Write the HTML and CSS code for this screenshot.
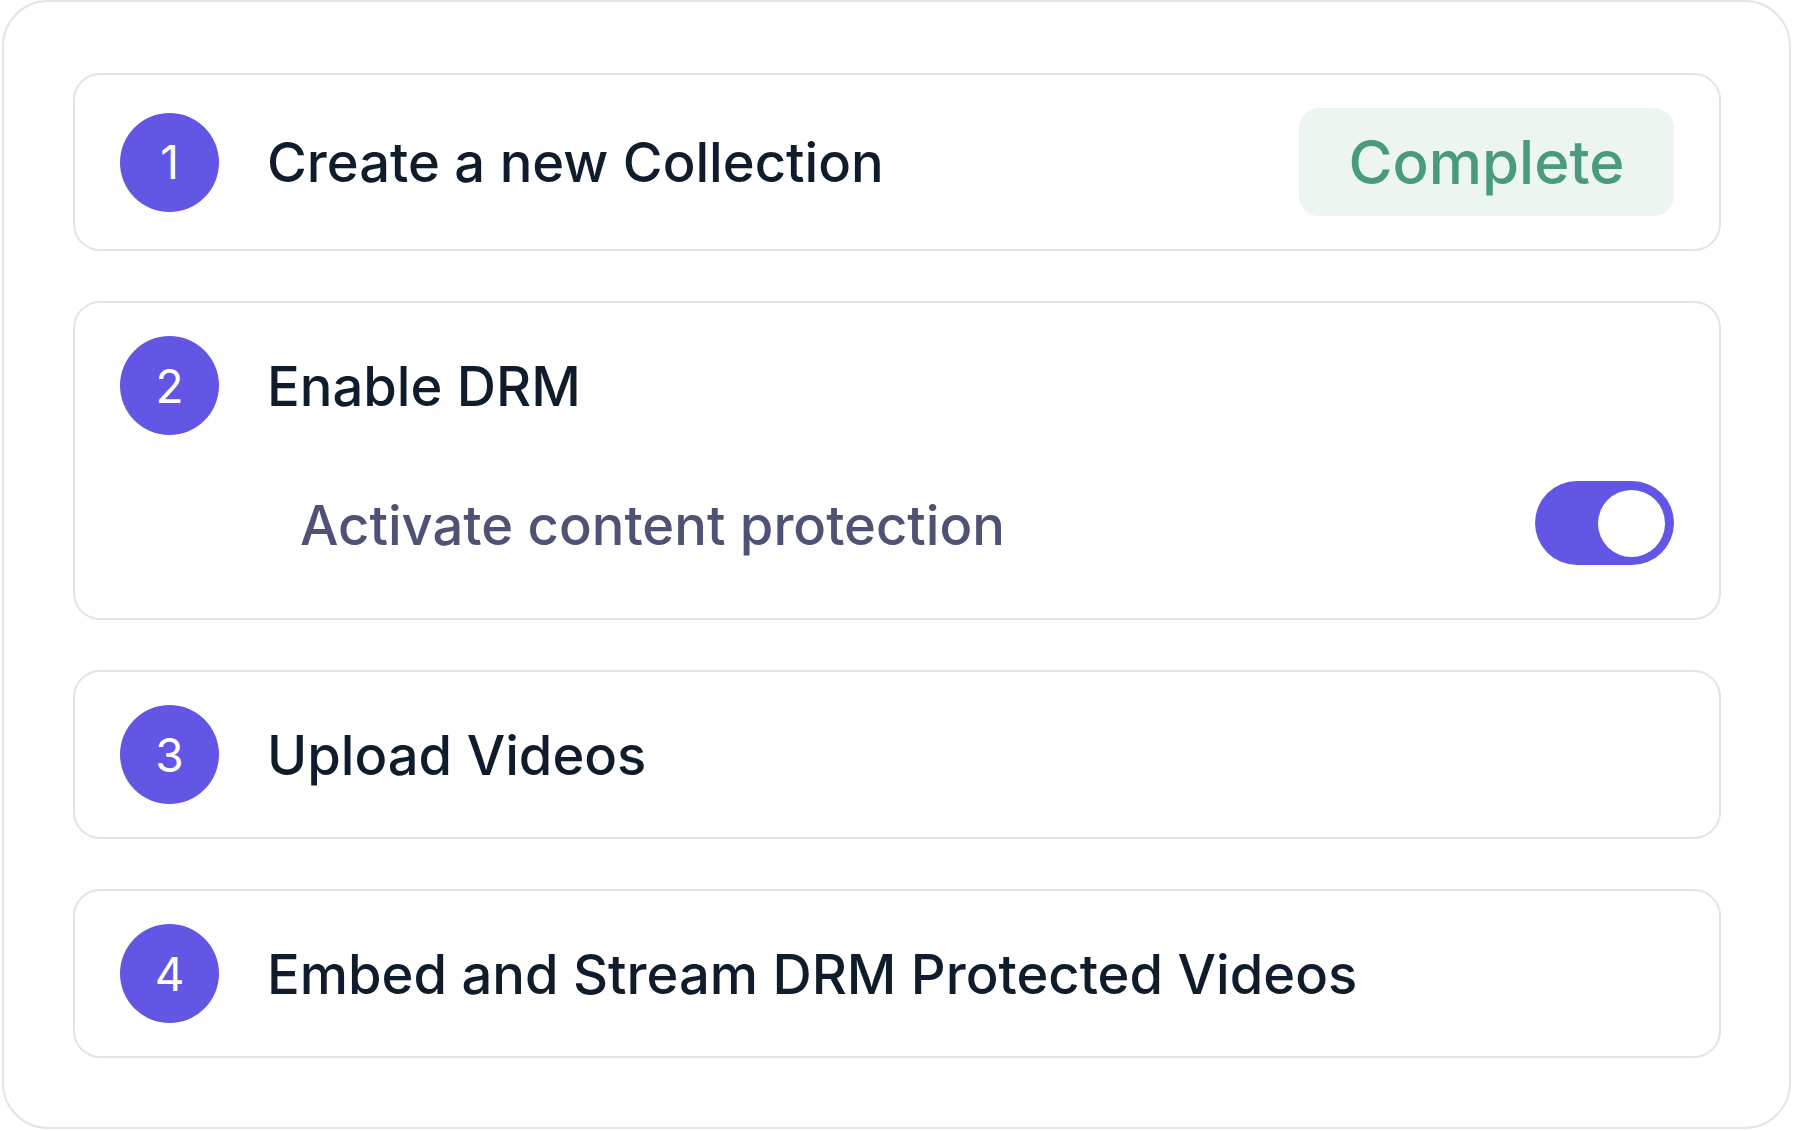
FILE: index.html
```html
<!DOCTYPE html>
<html lang="en">
<head>
<meta charset="utf-8">
<title>DRM setup steps</title>
<link rel="stylesheet" href="styles.css">
</head>
<body>
<div class="panel">
  <div class="step">
    <div class="step-row">
      <div class="num">1</div>
      <div class="title">Create a new Collection</div>
      <div class="badge">Complete</div>
    </div>
  </div>
  <div class="step step-expanded">
    <div class="step-row">
      <div class="num">2</div>
      <div class="title">Enable DRM</div>
    </div>
    <div class="sub-row">
      <div class="sub-label">Activate content protection</div>
      <div class="toggle"><span class="knob"></span></div>
    </div>
  </div>
  <div class="step">
    <div class="step-row">
      <div class="num">3</div>
      <div class="title">Upload Videos</div>
    </div>
  </div>
  <div class="step">
    <div class="step-row">
      <div class="num">4</div>
      <div class="title">Embed and Stream DRM Protected Videos</div>
    </div>
  </div>
</div>
</body>
</html>
```

FILE: styles.css
```css
* { box-sizing: border-box; }
html, body { margin: 0; padding: 0; background: #ffffff; }
body { font-family: Inter, "Noto Sans", sans-serif; color: #0f1c2b; }

.panel {
  width: 1789px;
  height: 1129px;
  margin-left: 2px;
  border: 2px solid #e3e3ea;
  border-radius: 46px;
  padding: 71px 68px 0 69px;
  display: flex;
  flex-direction: column;
  gap: 50px;
}

.step {
  border: 2px solid #e2e2e8;
  border-radius: 27px;
  padding: 33px 45px;
}

.step-row {
  display: flex;
  align-items: center;
  min-height: 99px;
}

.num {
  width: 99px;
  height: 99px;
  flex: 0 0 99px;
  border-radius: 50%;
  background: #6356e5;
  color: #ffffff;
  font-size: 46px;
  font-weight: 400;
  display: flex;
  align-items: center;
  justify-content: center;
}

.title {
  margin-left: 48px;
  font-size: 54.3px;
  font-weight: 500;
  flex: 1;
}

.badge {
  height: 108px;
  width: 375px;
  background: #edf5f1;
  color: #4a9a7d;
  border-radius: 20px;
  font-size: 60px;
  font-weight: 500;
  display: flex;
  align-items: center;
  justify-content: center;
}

.sub-row {
  display: flex;
  align-items: center;
  justify-content: space-between;
  margin-top: 46px;
  margin-bottom: 20px;
  padding-left: 180px;
}

.sub-label {
  font-size: 54.3px;
  font-weight: 500;
  color: #4e5275;
  padding-top: 3px;
}

.toggle {
  width: 139px;
  height: 84px;
  border-radius: 42px;
  background: #6356e5;
  display: flex;
  align-items: center;
  justify-content: flex-end;
  padding-right: 9px;
}

.knob {
  width: 67px;
  height: 67px;
  border-radius: 50%;
  background: #ffffff;
}
```
